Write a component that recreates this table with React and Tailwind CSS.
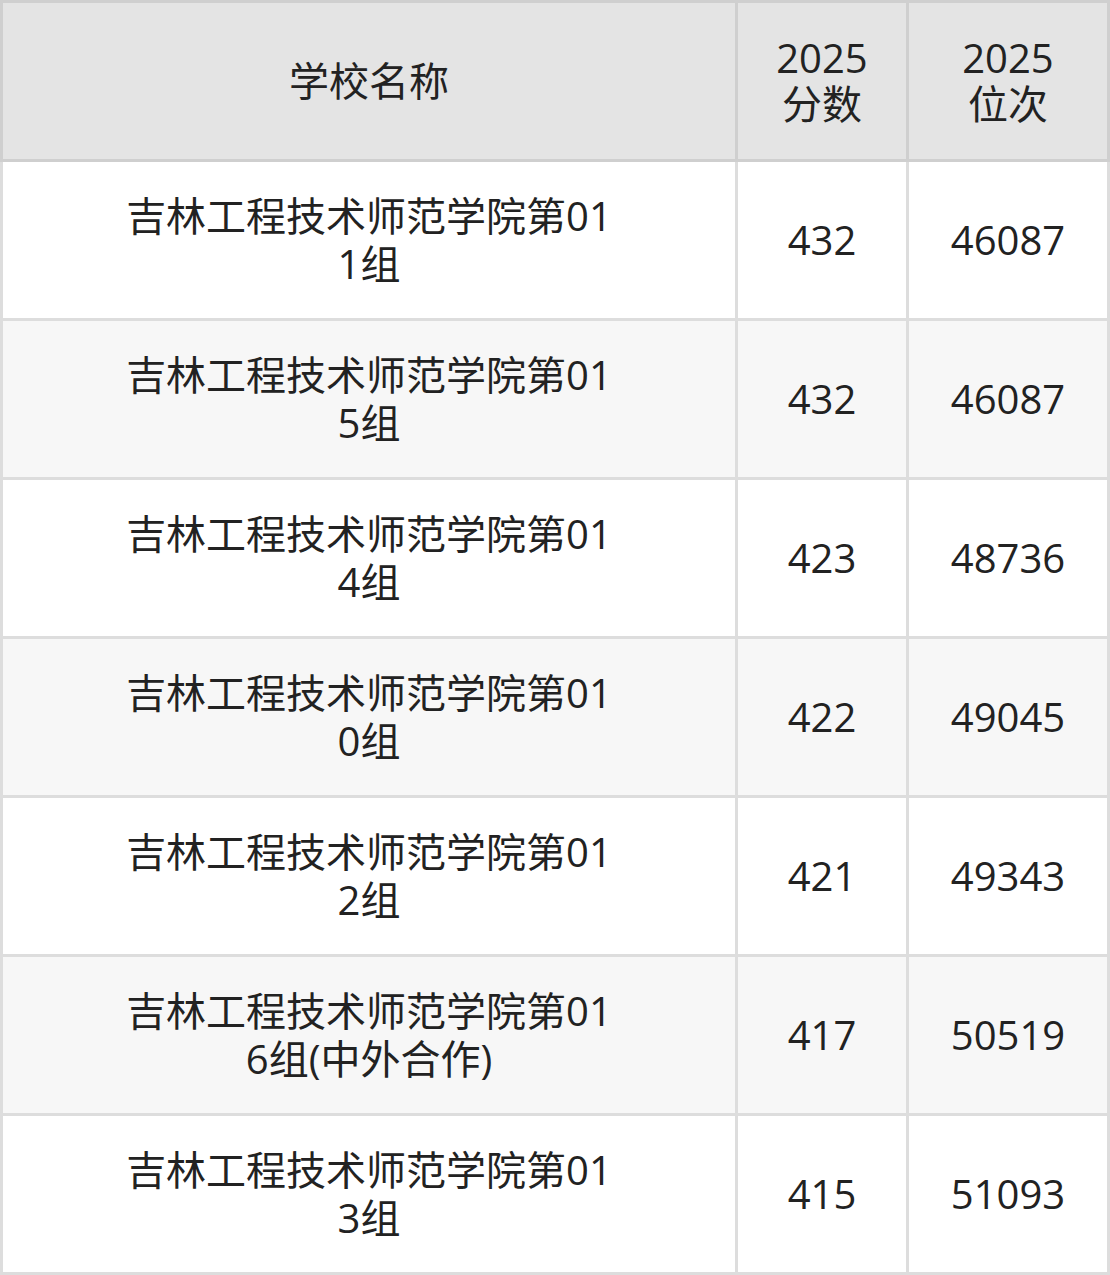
const rows = [
  { name: '吉林工程技术师范学院第011组', score: '432', rank: '46087' },
  { name: '吉林工程技术师范学院第015组', score: '432', rank: '46087' },
  { name: '吉林工程技术师范学院第014组', score: '423', rank: '48736' },
  { name: '吉林工程技术师范学院第010组', score: '422', rank: '49045' },
  { name: '吉林工程技术师范学院第012组', score: '421', rank: '49343' },
  { name: '吉林工程技术师范学院第016组(中外合作)', score: '417', rank: '50519' },
  { name: '吉林工程技术师范学院第013组', score: '415', rank: '51093' },
];

const cell = 'h-[159px] flex items-center justify-center text-center border-r-[3px] border-b-[3px]';

export default function App() {
  return (
    <div
      className="w-[1110px] text-[40px] leading-[48px] text-[#222222] bg-white"
      style={{ fontFamily: '"Open Sans", "Noto Sans CJK SC", sans-serif' }}
    >
      <div className="grid grid-cols-[738px_171px_201px] bg-[#e4e4e4] border-t-[3px] border-[#cfcfcf]">
        <div className={`${cell} border-l-[3px] border-[#cfcfcf]`}>学校名称</div>
        <div className={`${cell} border-[#cfcfcf]`}>
          <div className="leading-[46px]">
            <div>2025</div>
            <div>分数</div>
          </div>
        </div>
        <div className={`${cell} border-[#cfcfcf]`}>
          <div className="leading-[46px]">
            <div>2025</div>
            <div>位次</div>
          </div>
        </div>
      </div>
      {rows.map((r, i) => (
        <div
          key={i}
          className={`grid grid-cols-[738px_171px_201px] ${i % 2 === 1 ? 'bg-[#f7f7f7]' : 'bg-white'}`}
        >
          <div className={`${cell} border-l-[3px] border-[#dddddd]`}>
            <div className="w-[497px] break-all">{r.name}</div>
          </div>
          <div className={`${cell} border-[#dddddd]`}>{r.score}</div>
          <div className={`${cell} border-[#dddddd]`}>{r.rank}</div>
        </div>
      ))}
    </div>
  );
}
